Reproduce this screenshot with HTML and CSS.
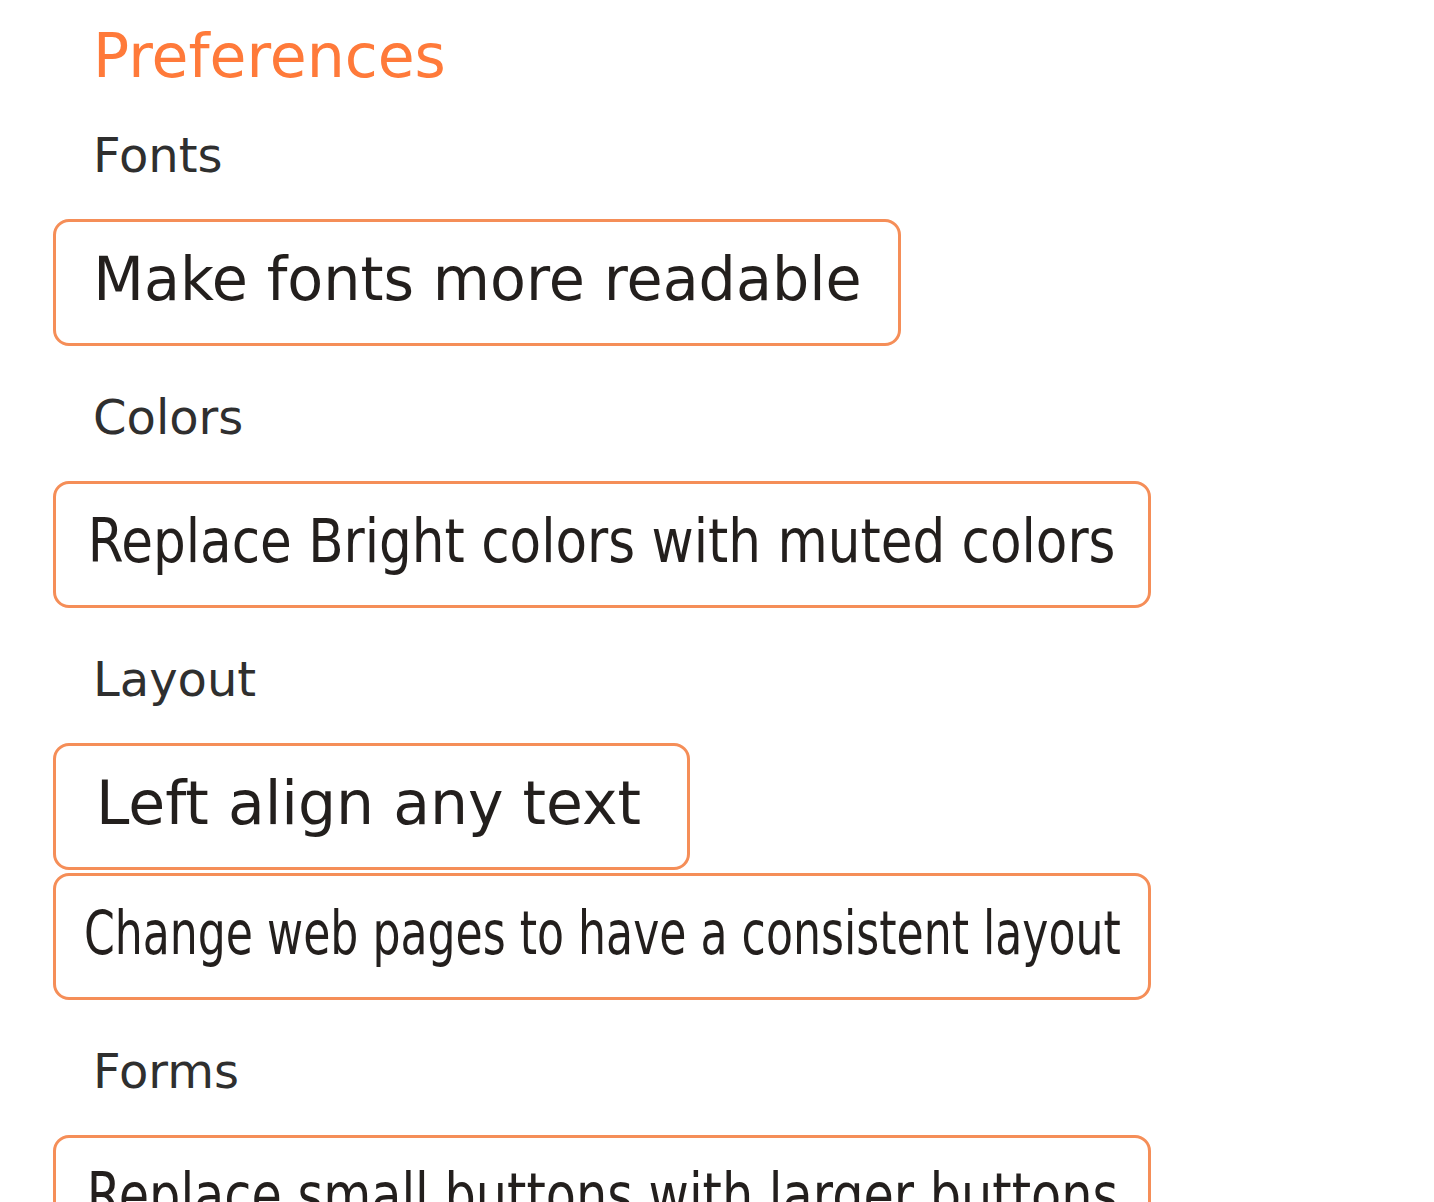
FILE: index.html
```html
<!DOCTYPE html>
<html lang="en">
<head>
<meta charset="utf-8">
<title>Preferences</title>
<link rel="stylesheet" href="styles.css">
</head>
<body>
<main class="page">
  <h1 class="title">Preferences</h1>

  <section class="group">
    <h2 class="label">Fonts</h2>
    <div class="options">
      <button class="btn btn-fonts"><span class="btn-text s-fonts">Make fonts more readable</span></button>
    </div>
  </section>

  <section class="group">
    <h2 class="label">Colors</h2>
    <div class="options">
      <button class="btn btn-wide"><span class="btn-text s-colors">Replace Bright colors with muted colors</span></button>
    </div>
  </section>

  <section class="group">
    <h2 class="label">Layout</h2>
    <div class="options">
      <button class="btn btn-left"><span class="btn-text">Left align any text</span></button>
      <button class="btn btn-wide"><span class="btn-text s-layout">Change web pages to have a consistent layout</span></button>
    </div>
  </section>

  <section class="group">
    <h2 class="label">Forms</h2>
    <div class="options">
      <button class="btn btn-wide"><span class="btn-text s-forms">Replace small buttons with larger buttons</span></button>
    </div>
  </section>
</main>
</body>
</html>
```

FILE: styles.css
```css
html, body {
  margin: 0;
  padding: 0;
  background: #ffffff;
}

body {
  font-family: "DejaVu Sans", Verdana, sans-serif;
  color: #2e2e2e;
  overflow: hidden;
}

.page {
  padding: 20px 0 0 53px;
}

.title {
  margin: 0 0 0 40px;
  font-size: 60px;
  line-height: 72px;
  font-weight: normal;
  color: #ff7a3a;
}

.group {
  margin-top: 43px;
}

.title + .group {
  margin-top: 35px;
}

.label {
  margin: 0 0 36px 40px;
  font-size: 48px;
  line-height: 56px;
  font-weight: normal;
  color: #2f2f2f;
}

.options {
  display: flex;
  flex-direction: column;
  align-items: flex-start;
  gap: 3px;
}

.btn {
  box-sizing: border-box;
  height: 127px;
  display: flex;
  justify-content: center;
  align-items: flex-start;
  padding: 22px 0 0 0;
  border: 3px solid #f58e58;
  border-radius: 16px;
  background: #ffffff;
  font-family: "DejaVu Sans", Verdana, sans-serif;
  font-size: 60px;
  line-height: 70px;
  color: #231f1d;
  overflow: hidden;
}

.btn-fonts { width: 848px; }
.btn-left { width: 637px; padding-right: 6px; }
.btn-wide { width: 1098px; }

.btn-text {
  display: inline-block;
  flex-shrink: 0;
  white-space: nowrap;
  transform-origin: center;
}

.s-fonts { transform: scaleX(0.979); }
.s-colors { transform: scaleX(0.86); }
.s-layout { transform: scaleX(0.736); }
.s-forms { transform: scaleX(0.822); }
```
